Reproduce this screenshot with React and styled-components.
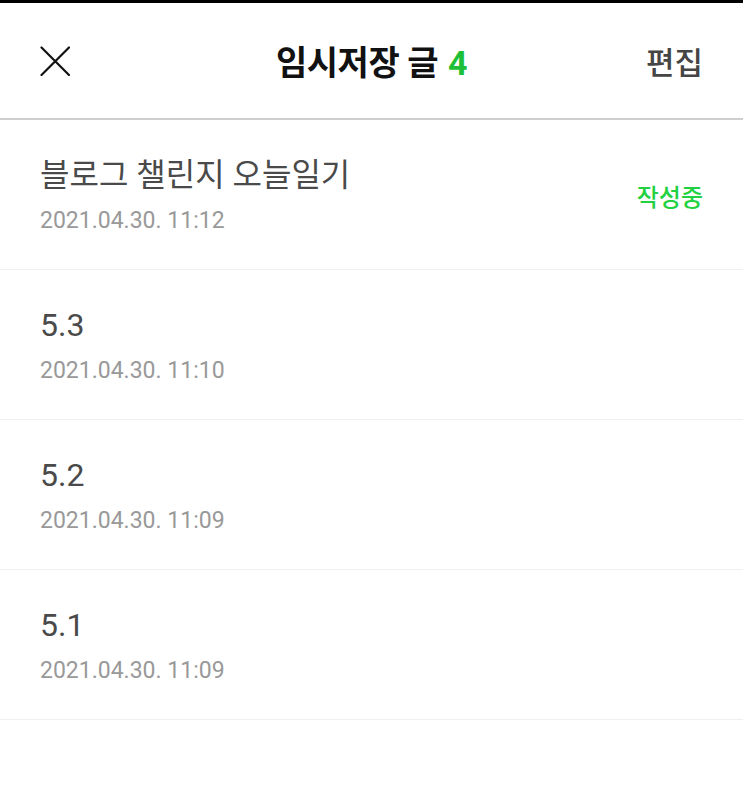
import React from 'react';
import styled, { createGlobalStyle } from 'styled-components';

const GlobalStyle = createGlobalStyle`
  html, body {
    margin: 0;
    padding: 0;
    background: #fff;
  }
  body {
    font-family: Roboto, 'Noto Sans CJK KR', sans-serif;
  }
`;

const Screen = styled.div`
  width: 743px;
  height: 801px;
  background: #fff;
  border-top: 3px solid #000;
  box-sizing: border-box;
  overflow: hidden;
`;

// Top bar: close, title with count, edit
const Header = styled.header`
  height: 117px;
  box-sizing: border-box;
  display: grid;
  grid-template-columns: 1fr auto 1fr;
  align-items: center;
  padding: 0 40px;
  border-bottom: 2px solid #cfcfcf;
`;

const CloseButton = styled.button`
  justify-self: start;
  width: 30px;
  height: 30px;
  padding: 0;
  border: 0;
  background: none;
  display: flex;
  align-items: center;
  justify-content: center;
  cursor: pointer;
`;

const Title = styled.h1`
  margin: 0;
  font-family: Roboto, 'Noto Sans CJK KR', sans-serif;
  font-size: 34px;
  font-weight: 700;
  color: #111;
  letter-spacing: -0.5px;
`;

const Count = styled.span`
  color: #1dbf37;
  margin-left: 10px;
`;

const EditButton = styled.button`
  justify-self: end;
  padding: 0;
  border: 0;
  background: none;
  font-family: 'Noto Sans CJK KR', sans-serif;
  font-size: 31px;
  font-weight: 500;
  color: #454545;
  cursor: pointer;
`;

const List = styled.ul`
  list-style: none;
  margin: 0;
  padding: 0;
`;

const Row = styled.li`
  height: 150px;
  box-sizing: border-box;
  padding: 35px 40px 0;
  border-bottom: 1px solid #f0f0f0;
  display: flex;
  align-items: flex-start;
  justify-content: space-between;
`;

const Info = styled.div`
  display: flex;
  flex-direction: column;
`;

const PostTitle = styled.div`
  font-family: Roboto, 'Noto Sans CJK KR', sans-serif;
  font-size: 32px;
  line-height: 40px;
  color: #4a4a4a;
`;

const PostDate = styled.div`
  margin-top: 11px;
  font-family: Roboto, sans-serif;
  font-size: 23px;
  line-height: 30px;
  color: #999;
`;

const Status = styled.span`
  margin-top: 26px;
  font-family: 'Noto Sans CJK KR', sans-serif;
  font-size: 24px;
  font-weight: 500;
  line-height: 30px;
  color: #22d13f;
`;

const drafts = [
  { title: '블로그 챌린지 오늘일기', date: '2021.04.30. 11:12', editing: true },
  { title: '5.3', date: '2021.04.30. 11:10' },
  { title: '5.2', date: '2021.04.30. 11:09' },
  { title: '5.1', date: '2021.04.30. 11:09' },
];

const CloseIcon = () => (
  <svg width="30" height="30" viewBox="0 0 30 30" fill="none">
    <path d="M1.5 1.5L29 29M29 1.5L1.5 29" stroke="#111" strokeWidth="2.2" strokeLinecap="round" />
  </svg>
);

export default function App() {
  return (
    <>
      <GlobalStyle />
      <Screen>
        <Header>
          <CloseButton aria-label="닫기">
            <CloseIcon />
          </CloseButton>
          <Title>
            임시저장 글<Count>4</Count>
          </Title>
          <EditButton>편집</EditButton>
        </Header>
        <List>
          {drafts.map((d, i) => (
            <Row key={i}>
              <Info>
                <PostTitle>{d.title}</PostTitle>
                <PostDate>{d.date}</PostDate>
              </Info>
              {d.editing && <Status>작성중</Status>}
            </Row>
          ))}
        </List>
      </Screen>
    </>
  );
}
